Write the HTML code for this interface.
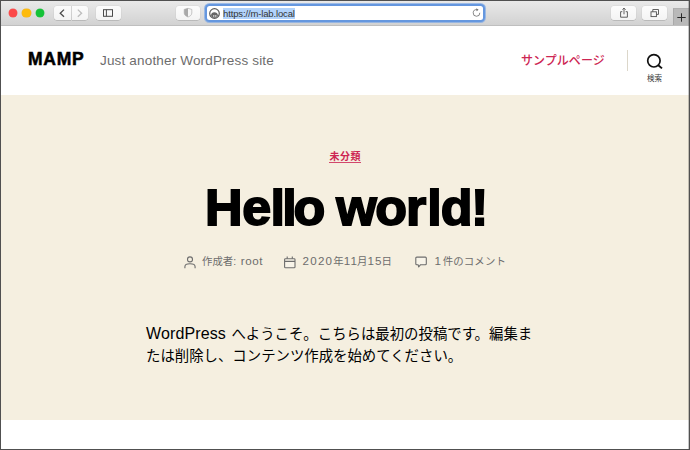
<!DOCTYPE html>
<html lang="ja">
<head>
<meta charset="utf-8">
<title>MAMP</title>
<style>
*{box-sizing:border-box;margin:0;padding:0}
html,body{width:690px;height:450px;overflow:hidden;background:#fff}
body{position:relative;font-family:"Liberation Sans","Noto Sans CJK JP",sans-serif;color:#000}
.abs{position:absolute}
#frame{left:0;top:0;width:690px;height:450px;border:1px solid #505050;z-index:50;pointer-events:none}
#toolbar{left:1px;top:1px;width:688px;height:24.5px;background:linear-gradient(#e9e9e9,#d2d2d2);border-bottom:1px solid #bfbfbf}
.dot{width:8.6px;height:8.6px;border-radius:50%;top:8.7px}
.btn{top:6px;height:14px;background:linear-gradient(#fcfcfc,#f4f4f4);border-radius:3px;box-shadow:0 0.5px 0.5px rgba(0,0,0,.22),0 0 0 0.5px rgba(0,0,0,.06)}
#url{left:207px;top:5.5px;width:276px;height:14.5px;background:#fff;border-radius:2.5px;box-shadow:0 0 0 2px #6597df,0 0 0 3px rgba(125,168,230,.7)}
#urltext{left:222.5px;top:7.7px;height:11.3px;font-size:9.5px;line-height:11.3px;color:#333;background:#b2d3fb;padding:0 0.5px;white-space:nowrap;letter-spacing:-0.14px}
#header{left:1px;top:25.5px;width:688px;height:69.5px;background:#fff}
#title{left:28px;top:48px;font-weight:bold;font-size:17.5px;line-height:22px;letter-spacing:0.75px;white-space:nowrap;-webkit-text-stroke:0.5px #000}
#tag{left:100px;top:52px;font-size:13.5px;line-height:18px;color:#6d6d6d;white-space:nowrap;letter-spacing:0.17px}
#menu{left:521px;top:52px;font-size:12px;line-height:18px;color:#cd2653;white-space:nowrap;font-weight:500;letter-spacing:0.05px}
#sep{left:627px;top:50px;width:1px;height:21px;background:#dcd7ca}
#kensaku{left:644px;top:74px;width:21px;text-align:center;font-size:7.5px;line-height:9px;color:#3a3a3a;white-space:nowrap;font-weight:400}
#hero{left:1px;top:95px;width:688px;height:325px;background:#f5efe0}
#cat{left:0;top:150px;width:690px;text-align:center;font-size:10px;line-height:14px;font-weight:bold;color:#cd2653;letter-spacing:.45px}
#cat span{display:inline-block;border-bottom:1px solid #d2486c;padding:0 0.5px 0 1px;line-height:11.4px}
#h1{left:205px;top:179px;font-size:50.5px;line-height:58px;font-weight:bold;white-space:pre;-webkit-text-stroke:1.8px #000;transform:scaleX(1.03);transform-origin:0 0}
.meta{top:253px;font-size:10.4px;line-height:16px;color:#6d6d6d;white-space:nowrap}
.meta b{font-weight:normal;font-size:11.6px;letter-spacing:1.25px;line-height:16px;vertical-align:-0.3px}
#p1,#p2{left:146px;font-size:14.4px;line-height:22px;white-space:nowrap;color:#000}
#p1 b{font-weight:normal;font-size:16px;line-height:22px;letter-spacing:0.12px;margin-right:1.5px}
#p1{top:323.4px}
#p2{top:345px}
svg{position:absolute;overflow:visible}
</style>
</head>
<body>
<div id="toolbar" class="abs"></div>
<div class="abs dot" style="left:8.7px;background:#fb4848;box-shadow:0 0 0 .5px #f26060"></div>
<div class="abs dot" style="left:22.4px;background:#fdbb0c;box-shadow:0 0 0 .5px #efb530"></div>
<div class="abs dot" style="left:35.6px;background:#14c237;box-shadow:0 0 0 .5px #3cc556"></div>

<div class="abs btn" style="left:54px;width:16.500px;border-radius:3px 0 0 3px"></div>
<div class="abs btn" style="left:72px;width:16px;border-radius:0 3px 3px 0"></div>
<svg style="left:55px;top:6px" width="33" height="14" viewBox="0 0 33 14"><path d="M9 3.600 L5.200 7.200 L9 10.800" fill="none" stroke="#4a4a4a" stroke-width="1.300"/><path d="M22.800 3.600 L26.600 7.200 L22.800 10.800" fill="none" stroke="#bdbdbd" stroke-width="1.300"/></svg>
<div class="abs btn" style="left:96px;width:25px"></div>
<svg style="left:96px;top:6px" width="25" height="14" viewBox="0 0 25 14"><rect x="7.500" y="3.700" width="9" height="6.600" fill="none" stroke="#4a4a4a" stroke-width="1"/><path d="M10.400 3.700 V10.300" stroke="#4a4a4a" stroke-width="1"/></svg>
<div class="abs btn" style="left:176px;width:24px"></div>
<svg style="left:176px;top:6px" width="24" height="14" viewBox="0 0 24 14"><path d="M12 2.300 L15.800 3.400 V7 C15.800 9 14 10.300 12 11 C10 10.300 8.200 9 8.200 7 V3.400 Z" fill="#f6f6f6" stroke="#b0b0b0" stroke-width=".7"/><path d="M12 2.300 L8.200 3.400 V7 C8.200 9 10 10.300 12 11 Z" fill="#a9a9a9"/></svg>

<div id="url" class="abs"></div>
<svg style="left:208.700px;top:7.500px" width="11" height="11" viewBox="0 0 11 11"><circle cx="5.500" cy="5.500" r="4.800" fill="#fff" stroke="#5a5a5a" stroke-width="1.200"/><path d="M2 7.200 C2.200 5.200 3.400 4.200 5.300 4.200 C7.400 4.200 8.800 5.400 9 7.400 C8.200 9 6.800 9.800 5.500 9.800 C4 9.800 2.700 9 2 7.200 Z M4.400 7 L4.500 9 L5.200 9 L5.300 7 Z M6.400 7 L6.500 9 L7.200 9 L7.300 7 Z" fill="#666" fill-rule="evenodd"/></svg>
<div id="urltext" class="abs">https://m-lab.local</div>
<svg style="left:471.500px;top:8px" width="9" height="9" viewBox="0 0 9 9"><path d="M7.800 4.800 A3.300 3.300 0 1 1 5 1.700" fill="none" stroke="#6a6a6a" stroke-width=".8"/><path d="M4.300 0.200 L6.600 1.700 L4.600 3.300 Z" fill="#6a6a6a"/></svg>

<div class="abs btn" style="left:611px;width:25px"></div>
<svg style="left:611px;top:6px" width="25" height="14" viewBox="0 0 25 14"><path d="M11.300 5.700 H9.600 V11.200 H16.400 V5.700 H14.700" fill="none" stroke="#505050" stroke-width=".9"/><path d="M13 8.300 V2.300 M11.400 3.700 L13 2.100 L14.600 3.700" fill="none" stroke="#505050" stroke-width=".9"/></svg>
<div class="abs btn" style="left:642px;width:25px"></div>
<svg style="left:642px;top:6px" width="25" height="14" viewBox="0 0 25 14"><rect x="9" y="5.800" width="5.400" height="4.800" fill="none" stroke="#505050" stroke-width=".9"/><path d="M10.800 5.800 V3.500 H16.500 V8.400 H14.400" fill="none" stroke="#505050" stroke-width=".9"/></svg>
<div class="abs" style="left:672.500px;top:8px;width:16.500px;height:17px;background:#b9b9b9;border-left:1px solid #aaa;border-top:1px solid #b0b0b0"></div>
<svg style="left:673px;top:8px" width="16" height="18" viewBox="0 0 16 18"><path d="M4.300 9.500 H12.700 M8.500 5.300 V13.700" stroke="#2a2a2a" stroke-width="1"/></svg>

<div id="header" class="abs"></div>
<div id="title" class="abs">MAMP</div>
<div id="tag" class="abs">Just another WordPress site</div>
<div id="menu" class="abs">サンプルページ</div>
<div id="sep" class="abs"></div>
<svg style="left:646px;top:53px" width="18" height="17" viewBox="0 0 18 17"><circle cx="7.900" cy="7.800" r="6.200" fill="none" stroke="#111" stroke-width="1.700"/><path d="M12.300 12.200 L16 15.400" stroke="#111" stroke-width="1.900"/></svg>
<div id="kensaku" class="abs">検索</div>

<div id="hero" class="abs"></div>
<div id="cat" class="abs"><span>未分類</span></div>
<h1 id="h1" class="abs"><span style="letter-spacing:-0.41px">H</span><span style="letter-spacing:-0.48px">e</span><span style="letter-spacing:-2.61px">l</span><span style="letter-spacing:-3.16px">l</span><span style="letter-spacing:0.0px">o</span><span style="letter-spacing:-3.37px"> </span><span style="letter-spacing:-1.6px">w</span><span style="letter-spacing:-0.89px">o</span><span style="letter-spacing:1.0px">r</span><span style="letter-spacing:-0.91px">l</span><span style="letter-spacing:-1.45px">d</span><span style="letter-spacing:0.0px">!</span></h1>

<svg style="left:183.500px;top:255.500px" width="12" height="13" viewBox="0 0 12 13"><circle cx="6" cy="3.400" r="2.500" fill="none" stroke="#6d6d6d" stroke-width="1.100"/><path d="M0.900 12.200 V10.700 C0.900 8.700 2.500 7.800 6 7.800 C9.500 7.800 11.100 8.700 11.100 10.700 V12.200" fill="none" stroke="#6d6d6d" stroke-width="1.100"/></svg>
<div class="abs meta" style="left:202px">作成者: <b style="letter-spacing:.6px;margin-left:1.800px">root</b></div>
<svg style="left:284px;top:255.500px" width="12" height="13" viewBox="0 0 12 13"><rect x="0.600" y="2.700" width="10.400" height="9.100" rx="0.900" fill="#f8f4e9" stroke="#6d6d6d" stroke-width="1.100"/><path d="M0.600 5.400 H11 M3.200 0.600 V2.700 M8.300 0.600 V2.700" stroke="#6d6d6d" stroke-width="1.100" fill="none"/></svg>
<div class="abs meta" style="left:302.500px"><b>2020</b>年<b style="margin-right:-1.250px">11</b>月<b style="margin-right:-1.250px">15</b>日</div>
<svg style="left:415px;top:255.500px" width="12" height="12" viewBox="0 0 12 12"><path d="M1.800 1.100 H10.300 Q11.300 1.100 11.300 2.100 V7.700 Q11.300 8.700 10.300 8.700 H5.600 L3.700 10.900 L3.100 8.700 H1.800 Q0.800 8.700 0.800 7.700 V2.100 Q0.800 1.100 1.800 1.100 Z" fill="#f8f4e9" stroke="#6d6d6d" stroke-width="1.100" stroke-linejoin="round"/></svg>
<div class="abs meta" style="left:434.500px"><b style="letter-spacing:1.800px">1</b><span style="letter-spacing:.15px">件のコメント</span></div>

<div id="p1" class="abs"><b>WordPress</b> へようこそ。こちらは最初の投稿です。編集ま</div>
<div id="p2" class="abs">たは削除し、コンテンツ作成を始めてください。</div>

<div class="abs" style="left:688px;top:1px;width:1px;height:448px;background:rgba(70,70,70,.3);z-index:49"></div>
<div id="frame" class="abs"></div>
</body>
</html>
